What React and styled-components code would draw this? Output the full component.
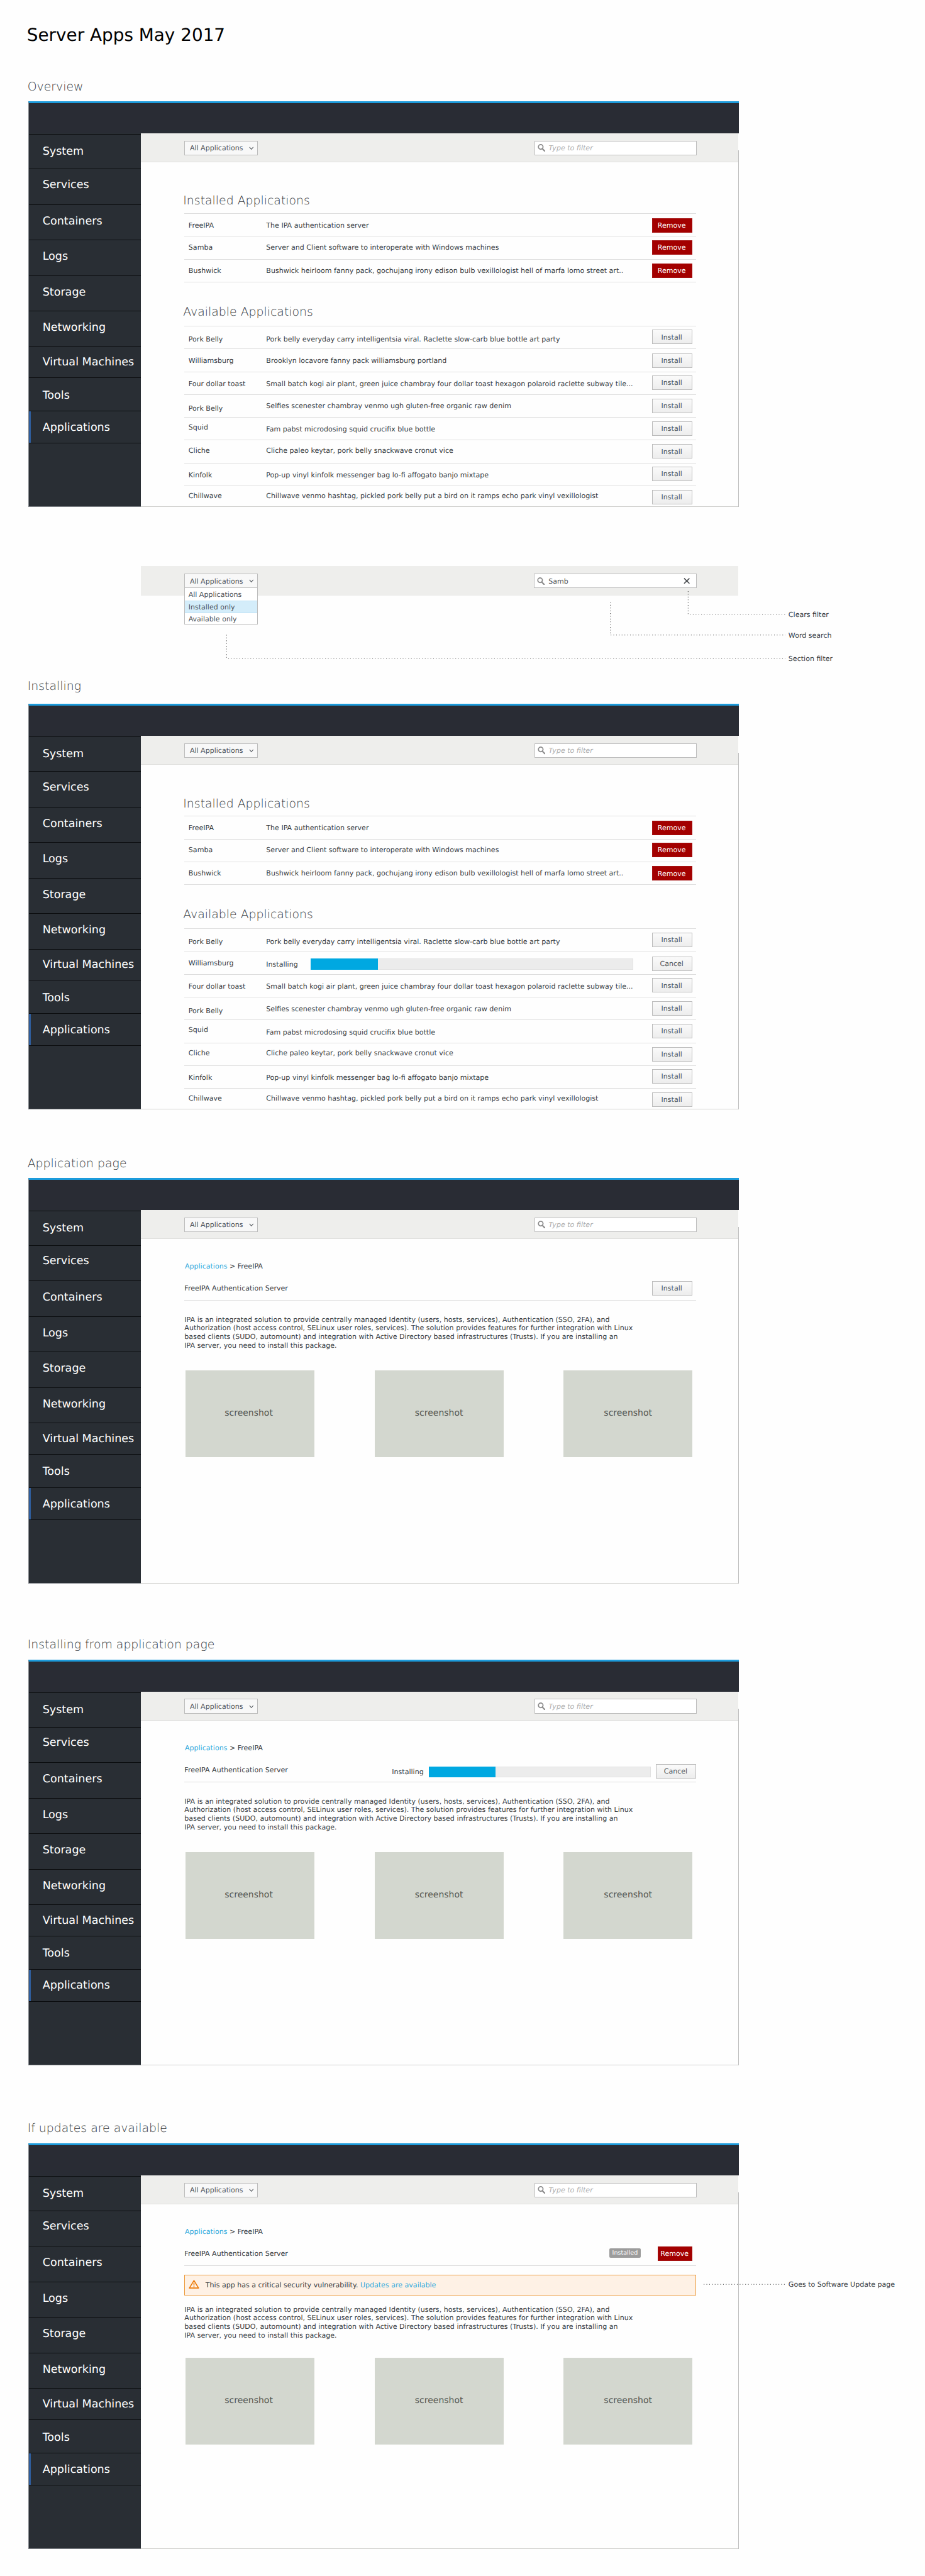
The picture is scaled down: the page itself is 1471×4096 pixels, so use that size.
import React from "react";
import styled, { createGlobalStyle, css } from "styled-components";

const SCALE = 0.9412;
const u = (n) => `${+(n * SCALE).toFixed(3)}px`;

/* Puts the first text baseline `base` units below the top of the box. */
const baseline = (size, base, line = size) => {
  const f = size * SCALE;
  const ascent = Math.round(f * 0.928);
  const descent = Math.round(f * 0.236);
  const inner = Math.floor((line * SCALE - ascent - descent) / 2) + ascent;
  return css`
    font-size: ${u(size)};
    line-height: ${u(line)};
    padding-top: ${(base * SCALE - inner).toFixed(3)}px;
  `;
};

const BODY = 11.76;

const GlobalStyle = createGlobalStyle`
  *, *::before, *::after { box-sizing: border-box; }
  html, body { margin: 0; padding: 0; background: #fefefe; }
  body {
    font-family: "DejaVu Sans", Verdana, sans-serif;
    text-rendering: geometricPrecision;
    color: #363b3e;
  }
`;

const Page = styled.main`
  position: relative;
  width: 1471px;
  height: 4096px;
  padding-left: ${u(47.4)};
  overflow: hidden;
  white-space: nowrap;
`;

const PageTitle = styled.h1`
  margin: 0 0 0 ${u(-2)};
  height: ${u(124)};
  font-weight: 400;
  color: #000;
  ${baseline(29.6, 69)}
`;

const Section = styled.section`
  margin-top: ${(p) => u(p.$gap || 0)};
`;

const SectionTitle = styled.h2`
  margin: 0 0 0 ${u(-1)};
  height: ${(p) => u(p.$height)};
  font-family: "DejaVu Sans", "DejaVu Sans Light", sans-serif;
  font-weight: 200;
  color: #363b3e;
  ${(p) => baseline(20.05, p.$base)}
`;

const Frame = styled.div`
  position: relative;
  width: ${u(1201)};
  height: ${u(685)};
  display: flex;
  flex-direction: column;
  &::after {
    content: "";
    position: absolute;
    right: 0;
    top: ${u(82.5)};
    bottom: 0;
    width: 1px;
    background: #bfbfbf;
  }
`;

const Masthead = styled.div`
  height: ${u(54)};
  flex: none;
  background: #292c34;
  border-top: 3px solid #1c9bdb;
  border-left: 1px solid #7d8186;
`;

const FrameBody = styled.div`
  flex: 1;
  display: flex;
  min-height: 0;
`;

const Sidebar = styled.nav`
  width: ${u(190.6)};
  flex: none;
  padding-top: ${u(1.2)};
  background: #292e34;
  border-left: 1px solid #7d8186;
  border-bottom: 1px solid #7d8186;
`;

const NavItem = styled.div`
  height: ${(p) => u(p.$height)};
  padding-left: ${u(23.4)};
  border-top: 1px solid #0b0d0f;
  color: #fff;
  ${(p) => baseline(18.67, p.$base - 1)}
  ${(p) =>
    p.$active &&
    css`
      box-shadow: inset 3px 0 0 #2f5d9b;
    `}
`;

const NavEnd = styled.div`
  border-top: 1px solid #0b0d0f;
`;

const Content = styled.div`
  flex: 1;
  min-width: 0;
  border-bottom: 1px solid #cfcfcc;
`;

const Toolbar = styled.div`
  height: ${u(49)};
  margin-right: 1px;
  padding: ${u(12.5)} ${u(70)} 0 ${u(73.3)};
  display: flex;
  align-items: flex-start;
  justify-content: space-between;
  background: #eeeeec;
  border-bottom: 1px solid ${(p) => (p.$flat ? "#ebebe9" : "#dfdfdd")};
`;

const SelectBox = styled.div`
  position: relative;
  width: ${u(124.6)};
  height: ${u(24.7)};
  display: flex;
  padding-left: ${u(8.4)};
  background: #f8f8f8;
  border: 1px solid #bdbdbd;
`;

const SelectLabel = styled.span`
  width: ${u(100.3)};
  color: #4d5258;
  ${baseline(BODY, 15.5)}
`;

const ChevronIcon = styled.svg`
  width: ${u(8)};
  height: ${u(6)};
  margin-top: ${u(8.8)};
`;

const Menu = styled.div`
  position: absolute;
  left: -1px;
  right: -1px;
  top: ${u(22.6)};
  height: ${u(62)};
  background: #fff;
  border: 1px solid #bdbdbd;
`;

const Option = styled.div`
  height: ${(p) => u(p.$height)};
  padding-left: ${u(6)};
  color: #4d5258;
  ${(p) => baseline(BODY, p.$base)}
  ${(p) =>
    p.$active &&
    css`
      background: #d4edfa;
      box-shadow: inset 0 1px 0 #bee1f4, inset 0 -1px 0 #bee1f4;
    `}
`;

const SearchBox = styled.div`
  width: ${u(274.6)};
  height: ${u(24.7)};
  display: flex;
  padding-left: ${u(4.5)};
  background: #fff;
  border: 1px solid #bdbdbd;
`;

const SearchGlyph = styled.svg`
  width: ${u(13)};
  height: ${u(13)};
  margin-top: ${u(4.8)};
`;

const SearchText = styled.span`
  width: ${u(233.6)};
  padding-left: ${u(5.8)};
  font-style: ${(p) => (p.$placeholder ? "italic" : "normal")};
  color: ${(p) => (p.$placeholder ? "#adadad" : "#4d5258")};
  ${baseline(BODY, 15.5)}
`;

const ClearGlyph = styled.svg`
  width: ${u(11)};
  height: ${u(10)};
  margin-top: ${u(6)};
`;

const Inner = styled.div`
  width: ${u(865)};
  margin-left: ${u(73.4)};
`;

const ListTitle = styled.h3`
  margin: 0 0 0 ${u(-1.9)};
  height: ${(p) => u(p.$height)};
  font-family: "DejaVu Sans", "DejaVu Sans Light", sans-serif;
  font-weight: 200;
  color: #363b3e;
  ${(p) => baseline(20.05, p.$base)}
`;

const Table = styled.div`
  border-top: 1px solid #dedede;
`;

const Row = styled.div`
  height: ${u(38.5)};
  display: flex;
  align-items: flex-start;
  padding-left: ${u(7.2)};
  border-bottom: 1px solid #dedede;
  &:last-child {
    border-bottom-color: ${(p) => (p.$open ? "transparent" : "#dedede")};
    height: ${(p) => (p.$open ? u(33) : u(38.5))};
  }
`;

const NameCell = styled.div`
  width: ${u(131.2)};
  flex: none;
  ${(p) => baseline(BODY, p.$base)}
`;

const DescCell = styled.div`
  width: ${u(652.2)};
  flex: none;
  display: flex;
  ${(p) => baseline(BODY, p.$base)}
`;

const ProgressCell = styled.div`
  width: ${u(652.2)};
  flex: none;
  display: flex;
`;

const Button = styled.div`
  width: ${(p) => u(p.$width || 67.8)};
  height: ${u(24.5)};
  flex: none;
  margin-top: ${(p) => u(p.$top)};
  margin-right: ${(p) => u(p.$right || 0)};
  margin-left: ${(p) => u(p.$left || 0)};
  padding-right: ${u(1.8)};
  text-align: center;
  color: #4d5258;
  background: linear-gradient(#fafafa, #ededed);
  border: 1px solid #bbb;
  ${baseline(BODY, 15.1)}
  ${(p) =>
    p.$danger &&
    css`
      color: #fff;
      background: #a30000;
      border-color: #a61414;
    `}
`;

const ProgressLabel = styled.span`
  width: ${(p) => u(p.$width)};
  flex: none;
  ${(p) => baseline(BODY, p.$base)}
`;

const Track = styled.div`
  width: ${(p) => u(p.$width)};
  height: ${u(19)};
  margin-top: ${(p) => u(p.$top)};
  background: #ececec;
  border: 1px solid #e2e2e2;
  border-left: 0;
`;

const Fill = styled.div`
  width: ${u(113.4)};
  height: ${u(19)};
  margin-top: -1px;
  background: #00a8e1;
`;

const Breadcrumb = styled.div`
  height: ${u(65)};
  padding-left: ${u(0.9)};
  ${baseline(BODY, 49.8)}
`;

const Link = styled.a`
  color: #2fa9dc;
`;

const AppHeader = styled.div`
  height: ${u(39)};
  display: flex;
  align-items: flex-start;
  padding-left: ${u(0.3)};
  border-bottom: 1px solid #dcdcdc;
`;

const AppName = styled.div`
  flex: 1;
  ${baseline(BODY, 22.4)}
`;

const Badge = styled.span`
  width: ${u(53)};
  height: ${u(16.4)};
  margin: ${u(9)} ${u(29)} 0 0;
  border-radius: 2px;
  text-align: center;
  color: #fff;
  background: #9c9c9c;
  ${baseline(10.15, 11.8)}
`;

const Alert = styled.div`
  height: ${u(35)};
  margin-top: ${u(14.8)};
  display: flex;
  padding-left: ${u(6.5)};
  background: #fef1e5;
  border: 1px solid #ec9a3c;
`;

const WarningGlyph = styled.svg`
  width: ${u(18)};
  height: ${u(15)};
  margin-top: ${u(8.2)};
`;

const AlertText = styled.span`
  padding-left: ${u(10.3)};
  ${baseline(BODY, 20.5)}
`;

const Description = styled.p`
  margin: 0;
  height: ${(p) => u(p.$height)};
  padding-left: ${u(0.3)};
  ${(p) => baseline(BODY, p.$base, 14.6)}
`;

const Line = styled.span`
  display: block;
`;

const Gallery = styled.div`
  display: flex;
  gap: ${u(101.5)};
  padding-left: ${u(2.2)};
`;

const Shot = styled.div`
  width: ${u(217.8)};
  height: ${u(146.5)};
  flex: none;
  text-align: center;
  color: #555753;
  background: #d3d7cf;
  &:first-child {
    padding-right: ${u(4.4)};
  }
  ${baseline(14.85, 75.9)}
`;

const FilterStrip = styled.section`
  height: ${u(284)};
  padding: ${u(100.5)} ${u(315)} 0 ${u(190.6)};
`;

const Leaders = styled.svg`
  position: absolute;
  left: 0;
  top: ${(p) => u(p.$top)};
  width: ${u(1563)};
  height: ${u(140)};
  fill: none;
  stroke: #4a4a4a;
  stroke-width: 1.1;
  stroke-dasharray: 1.2 3.48;
`;

const Note = styled.div`
  position: absolute;
  left: ${u(1332.2)};
  top: ${(p) => u(p.$base - 20)};
  ${baseline(BODY, 20)}
`;

const NAV = [
  ["System", 58.5, 35.8],
  ["Services", 60, 33.3],
  ["Containers", 60, 35],
  ["Logs", 60, 35],
  ["Storage", 60, 35],
  ["Networking", 60, 35],
  ["Virtual Machines", 52.4, 33.3],
  ["Tools", 56.6, 37],
  ["Applications", 54, 34.7],
];

const INSTALLED = [
  { name: "FreeIPA", desc: "The IPA authentication server", at: [22.9, 22.9, 6.9] },
  { name: "Samba", desc: "Server and Client software to interoperate with Windows machines", at: [22, 22, 5.6] },
  {
    name: "Bushwick",
    desc: "Bushwick heirloom fanny pack, gochujang irony edison bulb vexillologist hell of marfa lomo street art..",
    at: [22.6, 22.6, 6.9],
  },
];

const AVAILABLE = [
  {
    name: "Pork Belly",
    desc: "Pork belly everyday carry intelligentsia viral. Raclette slow-carb blue bottle art party",
    at: [25.5, 25.5, 5.5],
  },
  { name: "Williamsburg", desc: "Brooklyn locavore fanny pack williamsburg portland", at: [23, 23, 6.7] },
  {
    name: "Four dollar toast",
    desc: "Small batch kogi air plant, green juice chambray four dollar toast hexagon polaroid raclette subway tile...",
    at: [23.5, 23.5, 5.8],
  },
  { name: "Pork Belly", desc: "Selfies scenester chambray venmo ugh gluten-free organic raw denim", at: [26.3, 22.7, 6.3] },
  { name: "Squid", desc: "Fam pabst microdosing squid crucifix blue bottle", at: [19.6, 23.6, 5.9] },
  { name: "Cliche", desc: "Cliche paleo keytar, pork belly snackwave cronut vice", at: [20.8, 20.8, 6.4] },
  { name: "Kinfolk", desc: "Pop-up vinyl kinfolk messenger bag lo-fi affogato banjo mixtape", at: [23.6, 23.6, 5.6] },
  {
    name: "Chillwave",
    desc: "Chillwave venmo hashtag, pickled pork belly put a bird on it ramps echo park vinyl vexillologist",
    at: [20.5, 20.5, 6.2],
  },
];

const SearchIcon = () => (
  <SearchGlyph viewBox="0 0 13 13" fill="none" stroke="#8b8b8b">
    <circle cx="5.2" cy="4.9" r="3.9" strokeWidth="1.9" />
    <path d="M8 8l4 4" strokeWidth="2.3" strokeLinecap="round" />
  </SearchGlyph>
);

const Filters = ({ open, flat }) => (
  <Toolbar $flat={flat}>
    <SelectBox>
      <SelectLabel>All Applications</SelectLabel>
      <ChevronIcon viewBox="0 0 8 6" fill="none" stroke="#5c6166" strokeWidth="1.2">
        <path d="M0.8 1l3.2 3.6L7.2 1" />
      </ChevronIcon>
      {open && (
        <Menu>
          <Option $height={21.3} $base={14.5}>All Applications</Option>
          <Option $height={20.6} $base={14.2} $active>Installed only</Option>
          <Option $height={17} $base={14.4}>Available only</Option>
        </Menu>
      )}
    </SelectBox>
    <SearchBox>
      <SearchIcon />
      <SearchText $placeholder={!open}>{open ? "Samb" : "Type to filter"}</SearchText>
      {open && (
        <ClearGlyph viewBox="0 0 11 10" fill="none" stroke="#4a4d50" strokeWidth="1.7">
          <path d="M1 0.6l9 8.8M10 0.6l-9 8.8" />
        </ClearGlyph>
      )}
    </SearchBox>
  </Toolbar>
);

const Shell = ({ children }) => (
  <Frame>
    <Masthead />
    <FrameBody>
      <Sidebar>
        {NAV.map(([label, height, base]) => (
          <NavItem key={label} $height={height} $base={base} $active={label === "Applications"}>
            {label}
          </NavItem>
        ))}
        <NavEnd />
      </Sidebar>
      <Content>
        <Filters />
        <Inner>{children}</Inner>
      </Content>
    </FrameBody>
  </Frame>
);

const AppRow = ({ app, installed, installing, open }) => (
  <Row $open={open}>
    <NameCell $base={installing ? 22.6 : app.at[0]}>{app.name}</NameCell>
    {installing ? (
      <ProgressCell>
        <ProgressLabel $width={75.2} $base={24.6}>Installing</ProgressLabel>
        <Track $width={545} $top={10.9}>
          <Fill />
        </Track>
      </ProgressCell>
    ) : (
      <DescCell $base={app.at[1]}>{app.desc}</DescCell>
    )}
    <Button $top={installing ? 7.8 : app.at[2]} $danger={installed}>
      {installed ? "Remove" : installing ? "Cancel" : "Install"}
    </Button>
  </Row>
);

const AppList = ({ installing }) => (
  <>
    <ListTitle $height={86.2} $base={72.7}>Installed Applications</ListTitle>
    <Table>
      {INSTALLED.map((app) => (
        <AppRow key={app.name} app={app} installed />
      ))}
    </Table>
    <ListTitle $height={73.7} $base={57.2}>Available Applications</ListTitle>
    <Table>
      {AVAILABLE.map((app, i) => (
        <AppRow key={i} app={app} installing={app.name === installing} open />
      ))}
    </Table>
  </>
);

const AppDetail = ({ actions, alert }) => (
  <>
    <Breadcrumb>
      <Link>Applications</Link> &gt; FreeIPA
    </Breadcrumb>
    <AppHeader>
      <AppName>FreeIPA Authentication Server</AppName>
      {actions}
    </AppHeader>
    {alert}
    <Description $height={alert ? 105.7 : 118.4} $base={alert ? 27.6 : 36}>
      <Line>IPA is an integrated solution to provide centrally managed Identity (users, hosts, services), Authentication (SSO, 2FA), and</Line>
      <Line>Authorization (host access control, SELinux user roles, services). The solution provides features for further integration with Linux</Line>
      <Line>based clients (SUDO, automount) and integration with Active Directory based infrastructures (Trusts). If you are installing an</Line>
      <Line>IPA server, you need to install this package.</Line>
    </Description>
    <Gallery>
      <Shot>screenshot</Shot>
      <Shot>screenshot</Shot>
      <Shot>screenshot</Shot>
    </Gallery>
  </>
);

const UpdateAlert = () => (
  <Alert>
    <WarningGlyph viewBox="0 0 18 15" fill="none" stroke="#ec7a08">
      <path d="M9 1.3L16.8 14H1.2z" strokeWidth="1.7" strokeLinejoin="round" />
      <path d="M9 5.2v4.6M9 11v1.6" strokeWidth="1.6" />
    </WarningGlyph>
    <AlertText>
      This app has a critical security vulnerability. <Link>Updates are available</Link>
    </AlertText>
  </Alert>
);

export default function App() {
  return (
    <>
      <GlobalStyle />
      <Page>
        <PageTitle>Server Apps May 2017</PageTitle>

        <Section>
          <SectionTitle $height={47.2} $base={29.7}>Overview</SectionTitle>
          <Shell>
            <AppList />
          </Shell>
        </Section>

        <FilterStrip>
          <Filters open flat />
        </FilterStrip>
        <Leaders $top={990} viewBox="0 990 1563 140">
          <path d="M1162.7 998.5V1037.3H1328" />
          <path d="M1031.3 1017V1072.7H1327" />
          <path d="M382.9 1072.3V1111.7H1327" />
        </Leaders>
        <Note $base={1042.3}>Clears filter</Note>
        <Note $base={1077.3}>Word search</Note>
        <Note $base={1116.7}>Section filter</Note>

        <Section>
          <SectionTitle $height={49.1} $base={26}>Installing</SectionTitle>
          <Shell>
            <AppList installing="Williamsburg" />
          </Shell>
        </Section>

        <Section $gap={65.8}>
          <SectionTitle $height={49.9} $base={32.6}>Application page</SectionTitle>
          <Shell>
            <AppDetail actions={<Button $top={6} $right={6.6}>Install</Button>} />
          </Shell>
        </Section>

        <Section $gap={81}>
          <SectionTitle $height={47.8} $base={29.7}>Installing from application page</SectionTitle>
          <Shell>
            <AppDetail
              actions={
                <>
                  <ProgressLabel $width={61.9} $base={25.7}>Installing</ProgressLabel>
                  <Track $width={375} $top={12.3}>
                    <Fill />
                  </Track>
                  <Button $top={8.6} $left={9.4}>Cancel</Button>
                </>
              }
            />
          </Shell>
        </Section>

        <Section $gap={84.2}>
          <SectionTitle $height={48} $base={30.3}>If updates are available</SectionTitle>
          <Shell>
            <AppDetail
              actions={
                <>
                  <Badge>Installed</Badge>
                  <Button $danger $width={58.3} $top={6.2} $right={6.6}>Remove</Button>
                </>
              }
              alert={<UpdateAlert />}
            />
          </Shell>
        </Section>
        <Leaders $top={3800} viewBox="0 3800 1563 140">
          <path d="M1189 3858.7H1327" />
        </Leaders>
        <Note $base={3863}>Goes to Software Update page</Note>
      </Page>
    </>
  );
}
